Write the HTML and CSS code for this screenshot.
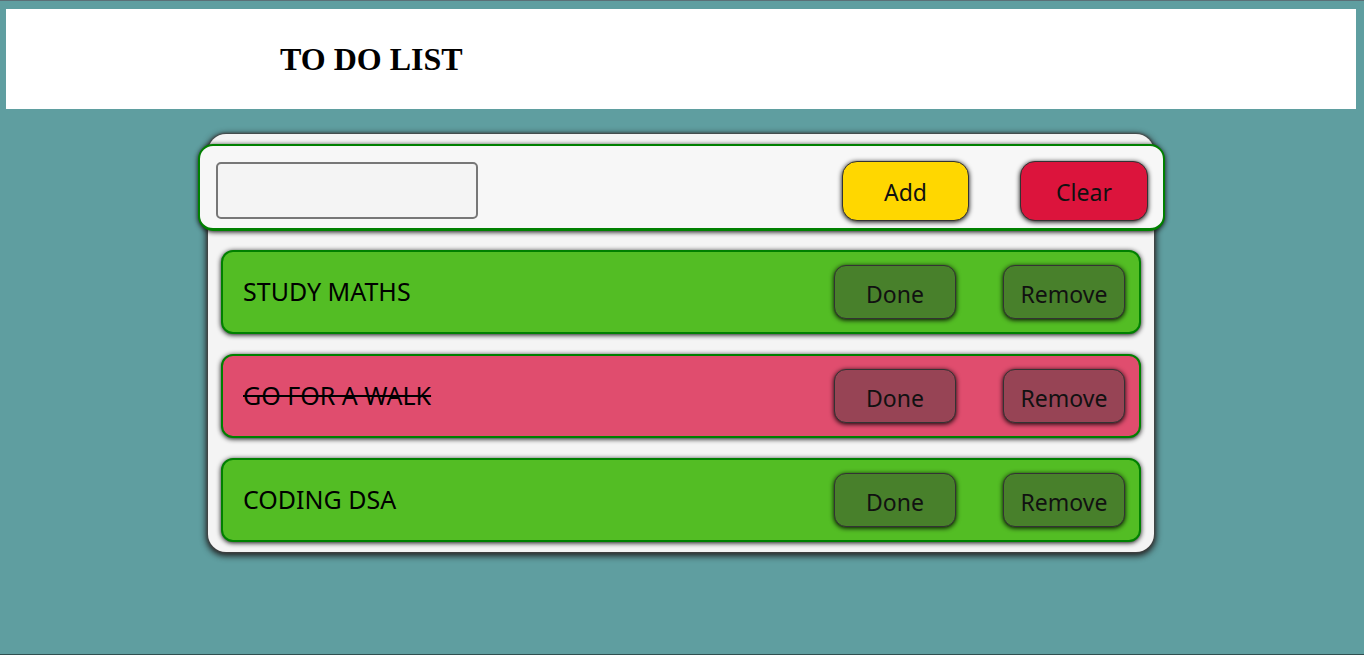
FILE: index.html
```html
<!DOCTYPE html>
<html>
<head>
<meta charset="utf-8">
<link rel="stylesheet" href="styles.css">
</head>
<body>
<header class="header">
  <h1 class="title">TO DO LIST</h1>
</header>
<main class="board">
  <div class="entry">
    <input class="entry-input" type="text">
    <div class="entry-actions">
      <button class="btn btn-add">Add</button>
      <button class="btn btn-clear">Clear</button>
    </div>
  </div>
  <ul class="tasks">
    <li class="task">
      <span class="task-text">STUDY MATHS</span>
      <div class="task-actions">
        <button class="btn task-btn">Done</button>
        <button class="btn task-btn">Remove</button>
      </div>
    </li>
    <li class="task task-done">
      <span class="task-text">GO FOR A WALK</span>
      <div class="task-actions">
        <button class="btn task-btn">Done</button>
        <button class="btn task-btn">Remove</button>
      </div>
    </li>
    <li class="task">
      <span class="task-text">CODING DSA</span>
      <div class="task-actions">
        <button class="btn task-btn">Done</button>
        <button class="btn task-btn">Remove</button>
      </div>
    </li>
  </ul>
</main>
</body>
</html>
```
FILE: styles.css
```css
html {
  background: #5f9ea0;
}
body {
  margin: 0;
  min-height: 653px;
  border-top: 1px solid #5b6f76;
  border-bottom: 1px solid #2f4f4f;
  background: #5f9ea0;
  font-family: "Noto Sans", "Open Sans", sans-serif;
}
.header {
  margin: 8px 8px 0 6px;
  height: 100px;
  background: #ffffff;
  display: flex;
  align-items: center;
  padding-left: 274px;
}
.title {
  margin: 0;
  font-family: "Liberation Serif", "Times New Roman", serif;
  font-size: 32px;
  font-weight: bold;
  color: #000;
}
.board {
  width: 946px;
  margin: 25px 0 0 208px;
  box-sizing: border-box;
  padding: 10px 13px 10px 13px;
  background: #f4f4f4;
  border-radius: 18px;
  box-shadow: 0 0 2px 1px #444, 0 2px 6px 2px #222;
}
.entry {
  margin: 0 -24px 0 -23px;
  height: 87px;
  box-sizing: border-box;
  border: 2px solid #008000;
  border-bottom-width: 3px;
  border-radius: 15px;
  background: #f7f7f7;
  box-shadow: 0 1px 5px #111;
  display: flex;
  align-items: center;
  justify-content: space-between;
  padding: 7px 15px 0 16px;
}
.entry-input {
  width: 262px;
  height: 57px;
  box-sizing: border-box;
  border: 2px solid #777;
  border-radius: 5px;
  background: #f4f4f4;
  margin: 0;
}
.entry-actions {
  display: flex;
  gap: 51px;
}
.btn {
  font-family: "Noto Sans", "Open Sans", sans-serif;
  font-size: 23px;
  color: #111;
  border: 1px solid #333;
  border-radius: 15px;
  box-shadow: 0 1px 5px #000;
  cursor: pointer;
  padding: 0;
}
.btn-add {
  width: 127px;
  height: 60px;
  background: #ffd700;
  padding-top: 3px;
}
.btn-clear {
  width: 128px;
  height: 60px;
  background: #dc143c;
  padding-top: 3px;
}
.tasks {
  list-style: none;
  margin: 19px 0 0 0;
  padding: 0;
  display: flex;
  flex-direction: column;
  gap: 20px;
}
.task {
  height: 84px;
  box-sizing: border-box;
  border: 2px solid #008000;
  border-radius: 12px;
  background: #53bd24;
  box-shadow: 0 1px 5px #111;
  display: flex;
  align-items: center;
  justify-content: space-between;
  padding: 0 14px 0 20px;
}
.task-text {
  font-size: 25px;
  color: #000;
  margin-top: -2px;
}
.task-actions {
  display: flex;
  gap: 47px;
}
.task-btn {
  width: 122px;
  height: 54px;
  border-radius: 12px;
  background: #48802b;
  padding-top: 4px;
}
.task-done {
  background: #e04d6e;
}
.task-done .task-text {
  text-decoration: line-through;
}
.task-done .task-btn {
  background: #974455;
}
```
